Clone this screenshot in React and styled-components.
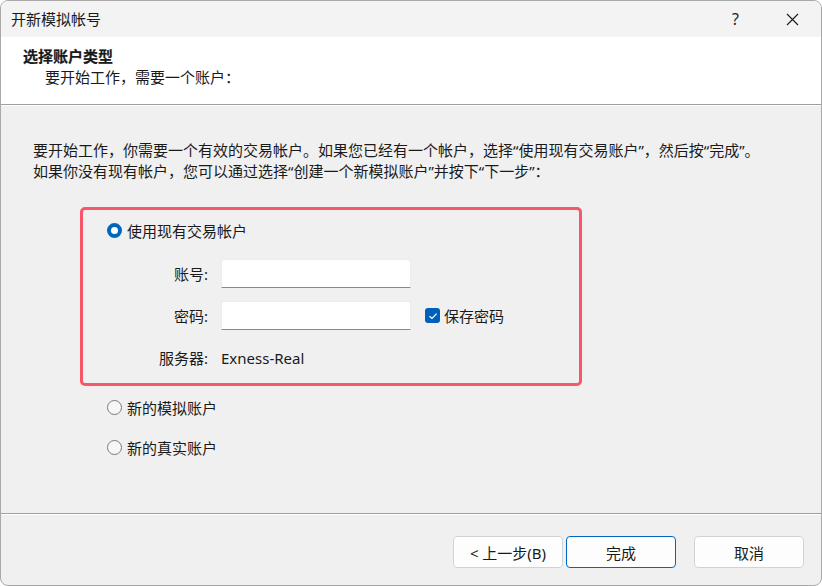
import React from 'react';
import styled, { createGlobalStyle } from 'styled-components';

const GlobalStyle = createGlobalStyle`
  * { box-sizing: border-box; }
  body {
    margin: 0;
    background: #ffffff;
    font-family: "Noto Sans", "Noto Sans CJK SC", sans-serif;
    font-size: 15px;
    color: #1a1a1a;
  }
`;

const Window = styled.div`
  width: 822px;
  height: 586px;
  border: 1px solid #a9a9a9;
  border-radius: 8px;
  overflow: hidden;
  display: flex;
  flex-direction: column;
  background: #f0f0f0;
`;

const TitleBar = styled.div`
  height: 36px;
  display: flex;
  align-items: center;
  background: #f3f3f3;
  padding-left: 10px;
`;

const Title = styled.div`
  flex: 1;
  line-height: 20px;
`;

const CaptionButton = styled.div`
  width: 57px;
  height: 36px;
  display: flex;
  align-items: center;
  justify-content: center;
  font-size: 16px;
  color: #222;
`;

const Header = styled.div`
  height: 68px;
  background: #ffffff;
  padding: 9px 0 0 22px;
  border-bottom: 1px solid #a0a0a0;
  box-shadow: 0 1px 0 #ffffff;
  line-height: 21px;
`;

const HeaderTitle = styled.div`
  font-weight: bold;
  -webkit-text-stroke: 0.2px #1a1a1a;
`;

const HeaderSub = styled.div`
  padding-left: 22px;
`;

const Body = styled.div`
  flex: 1;
  padding: 34px 0 0 32px;
  margin-top: 1px;
`;

const Para = styled.div`
  line-height: 21px;
`;

const Highlight = styled.div`
  margin: 25px 0 0 47px;
  width: 502px;
  height: 179px;
  border: 3px solid #f6576a;
  border-radius: 5px;
  padding-top: 10px;
`;

const RadioRow = styled.label`
  display: flex;
  align-items: center;
  height: 20px;
  gap: 5px;
  padding-left: ${p => p.$indent || '0px'};
  margin-top: ${p => p.$top || '0px'};
`;

const RadioDot = styled.span`
  width: 15px;
  height: 15px;
  border-radius: 50%;
  flex: none;
  background: ${p => (p.$on ? '#ffffff' : '#f7f7f7')};
  border: ${p => (p.$on ? '4px solid #0067c0' : '1px solid #7a7a7a')};
`;

const Fields = styled.div`
  display: grid;
  grid-template-columns: 125px 190px auto;
  grid-auto-rows: 29px;
  column-gap: 13px;
  row-gap: 13px;
  align-items: center;
  margin-top: 19px;
`;

const FieldLabel = styled.div`
  text-align: right;
`;

const TextBox = styled.div`
  height: 29px;
  background: #ffffff;
  border: 1px solid #ececec;
  border-bottom: 1px solid #8a8a8a;
  border-radius: 3px 3px 0 0;
`;

const CheckRow = styled.div`
  display: flex;
  align-items: center;
  gap: 4px;
  margin-left: 1px;
`;

const CheckBox = styled.span`
  width: 15px;
  height: 15px;
  border-radius: 3px;
  background: #005fb8;
  display: flex;
  align-items: center;
  justify-content: center;
`;

const Footer = styled.div`
  height: 72px;
  border-top: 1px solid #a0a0a0;
  box-shadow: inset 0 1px 0 #ffffff;
  display: flex;
  justify-content: flex-end;
  padding: 22px 17px 0 0;
`;

const Button = styled.div`
  width: 110px;
  height: 32px;
  margin-left: ${p => p.$gap || '0px'};
  background: #fdfdfd;
  border: 1px solid ${p => (p.$primary ? '#0067c0' : '#d3d3d3')};
  border-radius: 4px;
  display: flex;
  align-items: center;
  justify-content: center;
`;

export default function App() {
  return (
    <>
      <GlobalStyle />
      <Window>
        <TitleBar>
          <Title>开新模拟帐号</Title>
          <CaptionButton>?</CaptionButton>
          <CaptionButton>
            <svg width="13" height="13" viewBox="0 0 13 13">
              <path d="M1 1 L12 12 M12 1 L1 12" stroke="#1a1a1a" strokeWidth="1.1" fill="none" />
            </svg>
          </CaptionButton>
        </TitleBar>
        <Header>
          <HeaderTitle>选择账户类型</HeaderTitle>
          <HeaderSub>要开始工作，需要一个账户：</HeaderSub>
        </Header>
        <Body>
          <Para>要开始工作，你需要一个有效的交易帐户。如果您已经有一个帐户，选择“使用现有交易账户”，然后按“完成”。</Para>
          <Para>如果你没有现有帐户，您可以通过选择“创建一个新模拟账户”并按下“下一步”：</Para>
          <Highlight>
            <RadioRow $indent="24px">
              <RadioDot $on />
              使用现有交易帐户
            </RadioRow>
            <Fields>
              <FieldLabel>账号:</FieldLabel>
              <TextBox />
              <span />
              <FieldLabel>密码:</FieldLabel>
              <TextBox />
              <CheckRow>
                <CheckBox>
                  <svg width="10" height="10" viewBox="0 0 10 10">
                    <path d="M1.5 5.2 L4 7.5 L8.6 2.6" stroke="#ffffff" strokeWidth="1.2" fill="none" />
                  </svg>
                </CheckBox>
                保存密码
              </CheckRow>
              <FieldLabel>服务器:</FieldLabel>
              <div>Exness-Real</div>
            </Fields>
          </Highlight>
          <RadioRow $indent="74px" $top="11px">
            <RadioDot />
            新的模拟账户
          </RadioRow>
          <RadioRow $indent="74px" $top="20px">
            <RadioDot />
            新的真实账户
          </RadioRow>
        </Body>
        <Footer>
          <Button>&lt; 上一步(B)</Button>
          <Button $primary $gap="3px">完成</Button>
          <Button $gap="18px">取消</Button>
        </Footer>
      </Window>
    </>
  );
}
